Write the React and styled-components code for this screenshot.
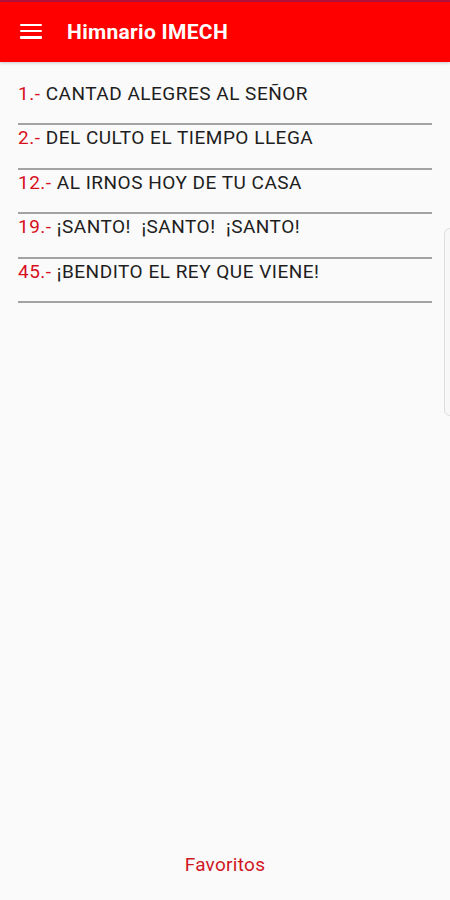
import React from "react"
import styled, {createGlobalStyle} from "styled-components"

const GlobalStyle = createGlobalStyle`
  html, body {
    margin: 0;
    padding: 0;
    background: #fafafa;
  }
  body {
    font-family: Roboto, "Noto Sans", "Liberation Sans", sans-serif;
  }
`

const Screen = styled.div`
  position: relative;
  display: flex;
  flex-direction: column;
  width: 450px;
  height: 900px;
  background: #fafafa;
  overflow: hidden;
`

const StatusStrip = styled.div`
  height: 2px;
  background: #b3123c;
`

const TopBar = styled.div`
  display: flex;
  align-items: center;
  height: 60px;
  padding-left: 20px;
  background: #ff0000;
  box-shadow: 0 1px 3px rgba(0, 0, 0, 0.2);
`

const MenuButton = styled.div`
  display: flex;
  flex-direction: column;
  justify-content: space-between;
  width: 22px;
  height: 15px;
  margin-right: 25px;
  margin-top: -2px;

  span {
    display: block;
    height: 2.5px;
    background: #fff;
    border-radius: 1px;
  }
`

const Title = styled.div`
  color: #fff;
  font-size: 21px;
  font-weight: 700;
  letter-spacing: 0.3px;
`

const List = styled.div`
  display: flex;
  flex-direction: column;
  padding: 18.5px 18px 0 18px;
  flex: 1;
`

const Row = styled.div`
  padding: 2px 0 18.5px 0;
  border-bottom: 2px solid #a3a3a3;
  font-size: 19px;
  line-height: 22px;
  letter-spacing: 0.5px;
  color: #1e1e1e;
  white-space: pre;
`

const Num = styled.span`
  color: #d8101c;
`

const Footer = styled.div`
  display: flex;
  justify-content: center;
  padding-bottom: 24px;
`

const FooterLink = styled.div`
  color: #d0171f;
  font-size: 19px;
  line-height: 22px;
  letter-spacing: 0.3px;
`

const EdgeHandle = styled.div`
  position: absolute;
  right: -6px;
  top: 228px;
  width: 10px;
  height: 186px;
  border: 1px solid #dedede;
  border-radius: 6px;
  background: #f7f7f7;
`

const hymns = [
  {n: "1", t: "CANTAD ALEGRES AL SEÑOR"},
  {n: "2", t: "DEL CULTO EL TIEMPO LLEGA"},
  {n: "12", t: "AL IRNOS HOY DE TU CASA"},
  {n: "19", t: "¡SANTO!  ¡SANTO!  ¡SANTO!"},
  {n: "45", t: "¡BENDITO EL REY QUE VIENE!"},
]

const App = () => {
  return (
    <Screen>
      <GlobalStyle />
      <StatusStrip />
      <TopBar>
        <MenuButton>
          <span />
          <span />
          <span />
        </MenuButton>
        <Title>Himnario IMECH</Title>
      </TopBar>
      <List>
        {hymns.map((h) => (
          <Row key={h.n}>
            <Num>{h.n}.- </Num>
            {h.t}
          </Row>
        ))}
      </List>
      <Footer>
        <FooterLink>Favoritos</FooterLink>
      </Footer>
      <EdgeHandle />
    </Screen>
  )
}

export default App
